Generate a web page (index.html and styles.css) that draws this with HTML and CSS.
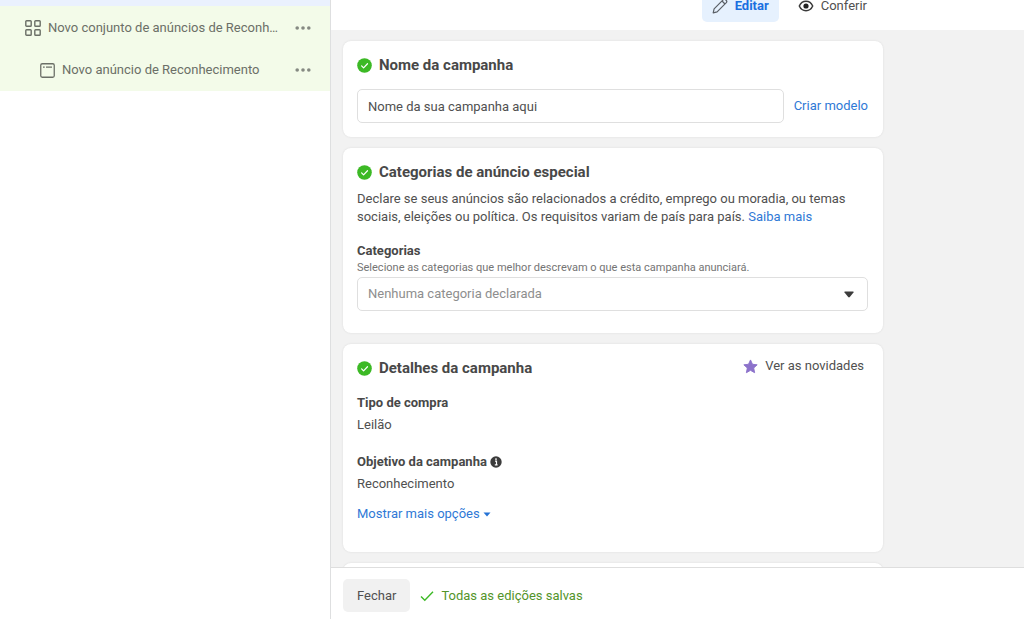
FILE: index.html
```html
<!DOCTYPE html>
<html lang="pt-BR">
<head>
<meta charset="utf-8">
<meta name="viewport" content="width=device-width, initial-scale=1">
<title>Editar campanha</title>
<link rel="stylesheet" href="styles.css">
</head>
<body>
<svg class="defs" aria-hidden="true">
  <symbol id="ok" viewBox="0 0 16 16"><circle cx="8" cy="8" r="7.8" fill="#3cb925"/><path d="M4.9 8.4l2.1 2.1 4.2-4.4" fill="none" stroke="#fff" stroke-width="1.3" stroke-linecap="round" stroke-linejoin="round"/></symbol>
  <symbol id="dots" viewBox="0 0 16 4"><circle cx="2.2" cy="2" r="1.8"/><circle cx="8" cy="2" r="1.8"/><circle cx="13.8" cy="2" r="1.8"/></symbol>
</svg>
<div class="app">
  <nav class="sidebar">
    <div class="tree-campaign"></div>
    <div class="tree-row">
      <svg class="grid-icon" viewBox="0 0 16 16"><g fill="none" stroke="#6b6f67" stroke-width="1.4"><rect x=".8" y=".8" width="5.4" height="5.4" rx=".8"/><rect x="9.8" y=".8" width="5.4" height="5.4" rx=".8"/><rect x=".8" y="9.8" width="5.4" height="5.4" rx=".8"/><rect x="9.8" y="9.8" width="5.4" height="5.4" rx=".8"/></g></svg>
      <a class="tree-name" href="#">Novo conjunto de anúncios de Reconhecimento</a>
      <button class="more" aria-label="Mais opções"><svg><use href="#dots"/></svg></button>
    </div>
    <div class="tree-row tree-child">
      <svg class="ad-icon" viewBox="0 0 14 14"><rect x=".7" y=".7" width="12.6" height="12.6" rx="1.4" fill="none" stroke="#6b6f67" stroke-width="1.2"/><path d="M2.8 3.8h1.6M5.6 3.8h5.6" stroke="#6b6f67" stroke-width="1.1"/></svg>
      <a class="tree-name" href="#">Novo anúncio de Reconhecimento</a>
      <button class="more" aria-label="Mais opções"><svg><use href="#dots"/></svg></button>
    </div>
  </nav>

  <main class="main">
    <header class="topbar">
      <button class="tab tab-active"><svg viewBox="0 0 16 16"><g fill="none" stroke="#5a5f66" stroke-width="1.2" stroke-linejoin="round"><path d="M1.2 14.8l.9-3.9L11.3 1.7a1.6 1.6 0 0 1 2.2 0l.8.8a1.6 1.6 0 0 1 0 2.2L5.1 13.900z"/><path d="M10 3l3 3"/></g></svg>Editar</button>
      <button class="tab"><svg viewBox="0 0 16 16"><path d="M1.300 8C2.600 5 5.100 3.300 8 3.300S13.400 5 14.700 8C13.400 11 10.900 12.700 8 12.700S2.600 11 1.300 8z" fill="none" stroke="#3a3a3a" stroke-width="1.500"/><circle cx="8" cy="8" r="2.600" fill="#222"/></svg>Conferir</button>
    </header>

    <div class="content">
      <section class="card">
        <h2 class="title"><svg><use href="#ok"/></svg><label for="name">Nome da campanha</label></h2>
        <div class="name-row">
          <input class="field" id="name" type="text" value="Nome da sua campanha aqui">
          <a class="link" href="#">Criar modelo</a>
        </div>
      </section>

      <section class="card card-categories">
        <h2 class="title"><svg><use href="#ok"/></svg>Categorias de anúncio especial</h2>
        <p class="text intro">Declare se seus anúncios são relacionados a crédito, emprego ou moradia, ou temas sociais, eleições ou política. Os requisitos variam de país para país. <a class="link" href="#">Saiba mais</a></p>
        <label class="label" for="categories">Categorias</label>
        <p class="help">Selecione as categorias que melhor descrevam o que esta campanha anunciará.</p>
        <div class="select-wrap">
          <select class="field select" id="categories"><option>Nenhuma categoria declarada</option></select>
          <svg class="caret" viewBox="0 0 10 7"><path d="M1 .5h8q1 .2.5 1L5.800 6q-.8.800-1.600 0L.5 1.500Q0 .7 1 .5z" fill="#3c3c3c"/></svg>
        </div>
      </section>

      <section class="card card-details">
        <div class="details-head">
          <h2 class="title"><svg><use href="#ok"/></svg>Detalhes da campanha</h2>
          <button class="news"><svg viewBox="0 0 16 16"><path d="M8 1l2.100 4.600 5 .6-3.700 3.400 1 5L8 12.100l-4.400 2.500 1-5L.9 6.200l5-.6z" fill="#8c72cb" stroke="#8c72cb" stroke-linejoin="round"/></svg>Ver as novidades</button>
        </div>
        <dl class="details">
          <dt class="label">Tipo de compra</dt>
          <dd class="text">Leilão</dd>
          <dt class="label">Objetivo da campanha <svg viewBox="0 0 12 12"><circle cx="6" cy="6" r="5.700" fill="#3c3c3c"/><path d="M5 5.200h1.500v3.300M4.800 8.800h2.800" fill="none" stroke="#fff" stroke-width="1.200"/><circle cx="6" cy="3.100" r=".9" fill="#fff"/></svg></dt>
          <dd class="text">Reconhecimento</dd>
        </dl>
        <button class="link expand">Mostrar mais opções <svg viewBox="0 0 8 5"><path d="M.5.500h7L4 4.500z" fill="#2673d5"/></svg></button>
      </section>

      <section class="card card-next"></section>
    </div>

    <footer class="footer">
      <button class="close">Fechar</button>
      <p class="saved"><svg viewBox="0 0 14 12"><path d="M1 6.500l3.800 3.800L13 1.800" fill="none" stroke="#3cb925" stroke-width="1.400"/></svg>Todas as edições salvas</p>
    </footer>
  </main>
</div>
</body>
</html>
```
FILE: styles.css
```css
* { box-sizing: border-box; }
body, h2, p, dl, dd { margin: 0; }
body, button, input, select { font-family: Roboto, "Liberation Sans", sans-serif; font-size: 13px; line-height: 18px; color: #505050; }
button { border: 0; padding: 0; background: none; cursor: pointer; }
a { text-decoration: none; }
svg { flex: none; }
.defs { display: none; }

.app { display: grid; grid-template-columns: 331px minmax(0, 1fr); height: 100vh; overflow: hidden; background: #fff; }

.sidebar { border-right: 1px solid #dedfe0; }
.tree-campaign { height: 6px; background: #eaf1fe; }
.tree-row { display: flex; align-items: center; height: 43px; padding: 0 19px 0 25px; background: #f3fbe9; }
.tree-child { height: 42px; padding-left: 40px; }
.grid-icon { width: 16px; height: 16px; margin-right: 7px; }
.ad-icon { width: 15px; height: 15px; margin-right: 7px; }
.tree-name { flex: 0 1 232px; min-width: 0; overflow: hidden; white-space: nowrap; text-overflow: ellipsis; color: #6b6f67; }
.more { display: flex; margin-left: auto; fill: #858982; }
.more svg { width: 16px; height: 4px; }

.main { display: flex; flex-direction: column; min-width: 0; min-height: 0; }
.topbar { display: flex; justify-content: flex-end; align-items: flex-end; gap: 9px; flex: none; width: 100%; max-width: 546px; height: 30px; padding: 0 0 8px; overflow: hidden; }
.tab { display: flex; align-items: center; gap: 7px; flex: none; height: 32px; padding: 0 10px; border-radius: 5px; }
.tab svg { width: 16px; height: 16px; }
.tab-active { background: #e6f1fe; color: #1a6fe0; font-weight: 700; }

.content { display: flex; flex-direction: column; gap: 11px; flex: 1; min-height: 0; padding: 11px 12px 0; overflow: hidden; background: #f2f2f2; }
.card { flex: none; width: 100%; max-width: 540px; padding: 14px 15px 14px 14px; border-radius: 8px; background: #fff; box-shadow: 0 0 2px #d8d8d8; }
.title { display: flex; align-items: center; gap: 7px; font-size: 15px; line-height: 20px; font-weight: 700; color: #484848; }
.title svg { width: 15px; height: 15px; }
.name-row { display: flex; align-items: center; gap: 10px; margin-top: 14px; }
.field { flex: 1; min-width: 0; height: 34px; padding: 0 10px; border: 1px solid #dfdfdf; border-radius: 5px; background: #fff; }
.link { color: #2f79d6; }

.card-categories { padding-bottom: 22px; }
.intro { margin: 8px 0 16px; }
.label { display: block; font-weight: 700; color: #484848; }
.help { font-size: 11px; line-height: 16px; color: #747474; }
.select-wrap { display: flex; align-items: center; position: relative; margin-top: 1px; }
.select { appearance: none; color: #8e8e8e; }
.caret { position: absolute; right: 14px; width: 10px; height: 7px; pointer-events: none; }

.card-details { padding-bottom: 29px; }
.details-head { display: flex; justify-content: space-between; align-items: flex-start; }
.news { display: flex; align-items: center; gap: 7px; padding-right: 4px; line-height: 16px; }
.news svg { width: 15px; height: 15px; }
.details { margin-top: 16px; }
.details dd { margin: 4px 0 19px; }
.details dd:last-child { margin-bottom: 12px; }
.details svg { width: 12px; height: 12px; vertical-align: -2px; }
.expand svg { width: 8px; height: 5px; vertical-align: 1px; }
.card-next { height: 60px; }

.footer { display: flex; align-items: center; gap: 10px; flex: none; height: 52px; padding: 4px 12px 0; border-top: 1px solid #dedede; }
.close { height: 33px; padding: 0 14px; border-radius: 5px; background: #f1f1f1; }
.saved { display: flex; align-items: center; gap: 7px; color: #53942a; }
.saved svg { width: 14px; height: 12px; }
```
